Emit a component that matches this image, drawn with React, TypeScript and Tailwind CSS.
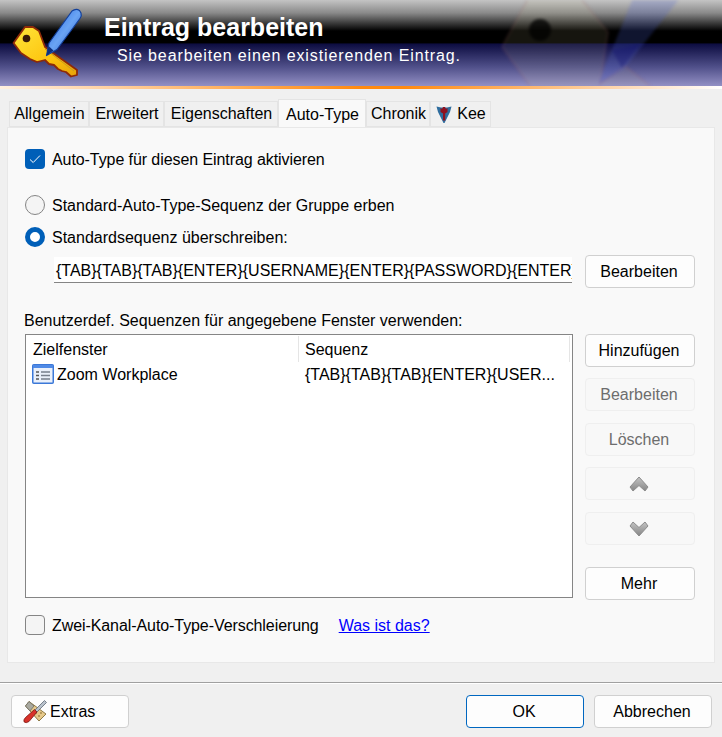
import type { ReactNode } from "react";

const KeyPencil = () => (
  <svg viewBox="0 0 100 90" className="h-full w-full">
    <defs>
      <linearGradient id="logo-key" x1="0" y1="0" x2="1" y2="1">
        <stop offset="0" stopColor="#ffe53a" />
        <stop offset="0.6" stopColor="#fdc40e" />
        <stop offset="1" stopColor="#e6a20a" />
      </linearGradient>
      <linearGradient id="logo-pen" x1="0" y1="0" x2="1" y2="1">
        <stop offset="0" stopColor="#1f5edc" />
        <stop offset="0.5" stopColor="#6aa4f4" />
        <stop offset="1" stopColor="#1a4cc0" />
      </linearGradient>
    </defs>
    <path
      d="M13.5 43 L25 27 L33 27 L39 31 L45 47 L53 53 L77 70 L77 75 L71 76.5 L66 72 L62 71 L58 69 L54 65 L49 64 L45 60 L37 62 L30 59 L21 53 Z"
      fill="url(#logo-key)"
      stroke="#8e2a08"
      strokeWidth="1.8"
      strokeLinejoin="round"
    />
    <path d="M45 49 L74 71" stroke="#c79a22" strokeWidth="1" fill="none" />
    <circle cx="26.5" cy="38.5" r="3.8" fill="#3a1a08" />
    <path
      d="M46.5 55.5 L49 43 L72 11 Q76 8 79.5 10.5 L81 13 Q82 16 80 18.5 L57 49.5 Z"
      fill="url(#logo-pen)"
      stroke="#123f9a"
      strokeWidth="1.2"
      strokeLinejoin="round"
    />
    <path d="M46.5 55.5 L48.5 46 L53.5 50.5 Z" fill="#0c2f7d" />
  </svg>
);

// faint oversized copy of the logo behind the banner
const Watermark = () => (
  <svg width="722" height="86" viewBox="0 0 722 86" className="blur-[1.5px]">
    <path
      d="M502 47 L530 -5 L578 -5 L608 32 L600 84 L625 66 L655 90 L533 90 Z"
      fill="#d8d090"
      fillOpacity="0.1"
      stroke="#a06060"
      strokeOpacity="0.22"
      strokeWidth="1.5"
    />
    <circle cx="540" cy="30" r="11" fill="#000" fillOpacity="0.75" />
    <path d="M598 84 L633 -2 L680 -2 L623 70 Z" fill="#4a60d8" fillOpacity="0.22" />
    <path d="M612 50 L640 44 L622 68 Z" fill="#101070" fillOpacity="0.35" />
  </svg>
);

const Tab = ({ children, className }: { children: ReactNode; className: string }) => (
  <div
    className={`flex h-[26px] items-center justify-center border border-[#e4e4e4] bg-[#f0f0f0] pl-px text-[16px] ${className}`}
  >
    {children}
  </div>
);

const Btn = ({
  children,
  disabled,
  className = "",
}: {
  children: ReactNode;
  disabled?: boolean;
  className?: string;
}) => (
  <button
    type="button"
    className={
      disabled
        ? `flex h-[33px] w-[110px] shrink-0 items-center justify-center rounded-[4px] border border-[#efefef] bg-[#f8f8f8] pr-[2px] text-[16px] text-[#6d6d6d] ${className}`
        : `flex h-[33px] w-[110px] shrink-0 items-center justify-center rounded-[4px] border border-[#d0d0d0] bg-[#fdfdfd] pr-[2px] text-[16px] text-black ${className}`
    }
  >
    {children}
  </button>
);

const Chevron = ({ up }: { up?: boolean }) => (
  <svg width="20" height="16" viewBox="0 0 20 16">
    <defs>
      <linearGradient id={up ? "chev-up" : "chev-down"} x1="0" y1="0" x2="0" y2="1">
        <stop offset="0" stopColor="#c4c4c4" />
        <stop offset="1" stopColor="#858585" />
      </linearGradient>
    </defs>
    <path
      d={up ? "M10 1 L19 11 L16 15 L10 9.5 L4 15 L1 11 Z" : "M10 15 L19 5 L16 1 L10 6.5 L4 1 L1 5 Z"}
      fill={up ? "url(#chev-up)" : "url(#chev-down)"}
      stroke="#8c8c8c"
      strokeWidth="1"
      strokeLinejoin="round"
    />
  </svg>
);

const Radio = ({ checked }: { checked?: boolean }) =>
  checked ? (
    <span className="size-[20px] shrink-0 rounded-full border-[5.5px] border-[#005fb8] bg-white" />
  ) : (
    <span className="size-[20px] shrink-0 rounded-full border border-[#858585] bg-[#f4f4f4]" />
  );

const ListIcon = () => (
  <svg width="22" height="20" viewBox="0 0 22 20" className="shrink-0">
    <rect x="0.75" y="0.75" width="20.5" height="18.5" rx="1" fill="#eaf0fa" stroke="#3b78d8" strokeWidth="1.5" />
    <rect x="1" y="1" width="20" height="3" fill="#4f8ae6" />
    <path d="M4 8h3M4 11.5h3M4 15h3" stroke="#555" strokeWidth="1.5" />
    <path d="M9 8h9M9 11.5h9M9 15h9" stroke="#777f8c" strokeWidth="1.5" />
  </svg>
);

const KeeIcon = () => (
  <svg width="16" height="18" viewBox="0 0 16 18">
    <path d="M0.5 1.5 L5 2.5 L11 2.5 L15.5 1.5 L14 7 L8.5 18 L7.5 18 L2 7 Z" fill="#2f6d9e" />
    <path
      d="M4.5 3 L6 4 L7 2 L9 2 L10 4 L11.5 3 L11.5 7 L9.2 8.5 L9.2 15.5 L7 15.5 L7 8.5 L4.5 7 Z"
      fill="#8f1220"
    />
  </svg>
);

const ToolsIcon = () => (
  <svg width="24" height="24" viewBox="0 0 24 24" className="shrink-0">
    <path d="M6 1.5 L2.5 6 L16 21 L23 14 Z" fill="#e6c98a" stroke="#8e7a45" strokeWidth="1" />
    <path d="M6 1.5 L2.5 6 L7 11 L11 6 Z" fill="#a9a9a0" stroke="#6c6c64" strokeWidth="0.8" />
    <path d="M13 13h0M16 16h0M18 13h0M15 10h0" stroke="#7a5a20" strokeWidth="1.6" strokeLinecap="round" />
    <path d="M21.5 0.5 L23.5 2.5 L13 13 L11 11 Z" fill="#b9c2cc" stroke="#5f6874" strokeWidth="0.8" />
    <path d="M11.5 9.5 L14 12 L6 21.5 Q3 23.5 1.2 22 Q0 20 2.5 17.5 Z" fill="#d8322a" stroke="#7c1510" strokeWidth="0.8" />
  </svg>
);

const App = () => {
  return (
    <div className="flex h-[737px] w-[722px] flex-col overflow-hidden bg-[#f0f0f0] font-['Liberation_Sans',Arial,sans-serif] text-black">
      <div className="relative h-[86px] shrink-0 overflow-hidden bg-[linear-gradient(to_bottom,#c4c4c4_0%,#8a8a8a_15%,#3a3a3a_27%,#000000_36%,#000000_50%,#0c0c40_51%,#50508a_78%,#9390c4_100%)]">
        <div className="absolute left-0 top-0">
          <Watermark />
        </div>
        <div className="absolute left-0 top-0 h-[90px] w-[100px]">
          <KeyPencil />
        </div>
        <div className="relative pl-[104px] pt-[12px] text-[25px] font-bold leading-[30px] text-white">
          Eintrag bearbeiten
        </div>
        <div className="relative pl-[117px] pt-[2px] text-[16px] leading-[24px] tracking-[0.88px] text-white">
          Sie bearbeiten einen existierenden Eintrag.
        </div>
      </div>
      <div className="h-[3px] shrink-0 bg-[linear-gradient(to_right,#fff0e0_0%,#ff8a10_50%,#ff8a10_56%,#ffffff_100%)]" />

      <div className="flex h-[38px] shrink-0 items-end pl-[9px]">
        <Tab className="w-[80px]">Allgemein</Tab>
        <Tab className="w-[75px]">Erweitert</Tab>
        <Tab className="w-[114px]">Eigenschaften</Tab>
        <div className="flex h-[28px] w-[88px] items-start justify-center border border-b-0 border-[#e4e4e4] bg-[#f9f9f9] pl-px pt-[3px] text-[16px]">
          Auto-Type
        </div>
        <Tab className="w-[64px]">Chronik</Tab>
        <Tab className="w-[61px]">
          <span className="flex items-center gap-[5px]">
            <KeeIcon />
            Kee
          </span>
        </Tab>
      </div>

      <div className="mx-[7px] flex h-[536px] shrink-0 flex-col border border-[#e8e8e8] bg-[#f9f9f9] pl-[17px] pr-[20px] text-[16px]">
        <div className="mt-[21px] flex h-[20px] items-center gap-[7px]">
          <span className="flex size-[20px] items-center justify-center rounded-[4px] bg-[#005fb8]">
            <svg width="12" height="10" viewBox="0 0 12 10">
              <path d="M1 5.5 L4.2 8.5 L11 1.5" fill="none" stroke="#fff" strokeWidth="1" />
            </svg>
          </span>
          <span className="mt-[2px] tracking-[-0.08px]">Auto-Type für diesen Eintrag aktivieren</span>
        </div>
        <div className="mt-[26px] flex h-[20px] items-center gap-[7px]">
          <Radio />
          <span className="mt-[2px]">Standard-Auto-Type-Sequenz der Gruppe erben</span>
        </div>
        <div className="mt-[12px] flex h-[20px] items-center gap-[7px]">
          <Radio checked />
          <span className="mt-[2px]">Standardsequenz überschreiben:</span>
        </div>
        <div className="mt-[8px] flex items-start pl-[29px]">
          <div className="mt-[2px] h-[26px] w-[518px] shrink-0 overflow-hidden whitespace-nowrap border-b border-[#858585] bg-white pl-[2px] pt-[4px] text-[16px] leading-[20px]">
            {"{TAB}{TAB}{TAB}{ENTER}{USERNAME}{ENTER}{PASSWORD}{ENTER}"}
          </div>
          <Btn className="ml-[13px]">Bearbeiten</Btn>
        </div>

        <div className="-ml-px mt-[24px] h-[22px] leading-[18px]">Benutzerdef. Sequenzen für angegebene Fenster verwenden:</div>

        <div className="flex items-start">
          <div className="h-[264px] w-[548px] shrink-0 border border-[#858585] bg-white">
            <div className="flex h-[27px] pt-px">
              <div className="flex h-[26px] w-[273px] items-center border-r border-[#e5e5e5] pl-[7px] pt-[2px]">Zielfenster</div>
              <div className="flex h-[26px] w-[271px] items-center border-r border-[#e5e5e5] pl-[6px] pt-[2px]">Sequenz</div>
            </div>
            <div className="flex h-[24px] items-center">
              <div className="flex w-[273px] items-center gap-[3px] pl-[6px]">
                <ListIcon />
                <span className="mt-[2px]">Zoom Workplace</span>
              </div>
              <div className="mt-[2px] pl-[6px]">{"{TAB}{TAB}{TAB}{ENTER}{USER..."}</div>
            </div>
          </div>
          <div className="ml-[12px] flex flex-col">
            <Btn>Hinzufügen</Btn>
            <Btn disabled className="mt-[11px]">Bearbeiten</Btn>
            <Btn disabled className="mt-[12px]">Löschen</Btn>
            <Btn disabled className="mt-[11px]">
              <Chevron up />
            </Btn>
            <Btn disabled className="mt-[12px]">
              <Chevron />
            </Btn>
            <Btn className="mt-[22px]">Mehr</Btn>
          </div>
        </div>

        <div className="mt-[15px] flex h-[20px] items-center">
          <span className="size-[20px] shrink-0 rounded-[4px] border border-[#858585] bg-[#f4f4f4]" />
          <span className="ml-[7px] mt-[2px] tracking-[-0.08px]">Zwei-Kanal-Auto-Type-Verschleierung</span>
          <a href="#" className="ml-[20px] mt-[2px] text-[#0000ff] underline">
            Was ist das?
          </a>
        </div>
      </div>

      <div className="mt-[19px] shrink-0 border-t border-[#a0a0a0]">
        <div className="h-px bg-white" />
        <div className="flex items-start pl-[11px] pr-[10px] pt-[11px]">
          <button
            type="button"
            className="flex h-[33px] w-[118px] items-center gap-[3px] rounded-[4px] border border-[#d0d0d0] bg-[#fdfdfd] pl-[11px] text-[16px]"
          >
            <ToolsIcon />
            Extras
          </button>
          <button
            type="button"
            className="ml-auto h-[33px] w-[118px] rounded-[4px] border border-[#0067c0] bg-[#fdfdfd] pr-[2px] text-[16px]"
          >
            OK
          </button>
          <button
            type="button"
            className="ml-[10px] h-[33px] w-[118px] rounded-[4px] border border-[#d0d0d0] bg-[#fdfdfd] pr-[2px] text-[16px]"
          >
            Abbrechen
          </button>
        </div>
      </div>
    </div>
  );
};

export default App;
